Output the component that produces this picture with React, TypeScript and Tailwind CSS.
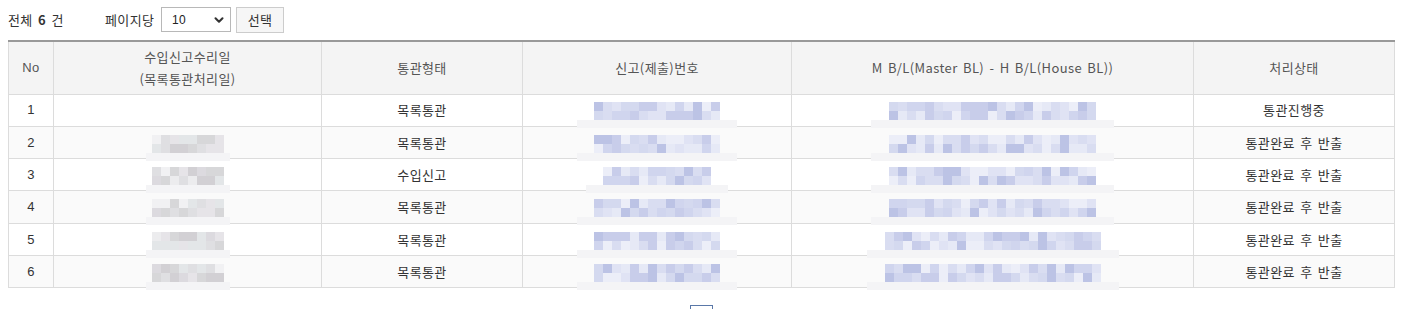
import { ChevronDown } from "lucide-react";

type Tone = "blue" | "gray";

const palettes: Record<Tone, string[]> = {
  blue: ["#c8cdea", "#d0d5ee", "#d9ddf1", "#e0e3f4", "#e6e9f6", "#eceef8", "#bcc3e5", "#d4d9ef"],
  gray: ["#d7d7d9", "#d2d0d4", "#dfdfe2", "#e6e4e8", "#ececee", "#dcdadf", "#f1f1f3", "#e3e6e8"],
};

// simple deterministic noise so the mosaic looks the same every render
const pick = (seed: number, i: number, len: number) => {
  const x = Math.sin(seed * 97.13 + i * 13.71) * 10000;
  return Math.floor((x - Math.floor(x)) * len);
};

const Mosaic = ({
  cells,
  tone,
  seed,
  band,
}: {
  cells: number;
  tone: Tone;
  seed: number;
  band: number;
}) => {
  const colors = palettes[tone];
  const rows = [0, 1];
  return (
    <div className="relative inline-flex flex-col align-middle">
      {rows.map((r) => (
        <div key={r} className="flex">
          {Array.from({ length: cells }).map((_, i) => (
            <div
              key={i}
              className="w-[9px] h-[9px]"
              style={{ backgroundColor: colors[pick(seed + r * 7, i, colors.length)] }}
            />
          ))}
        </div>
      ))}
      <div
        className="absolute top-[18px] h-[8px] bg-[#f4f4f6]"
        style={{ left: -band, right: -band }}
      />
    </div>
  );
};

type Row = {
  no: number;
  date: boolean;
  type: string;
  status: string;
  decl: number;
  bl: number;
};

const rows: Row[] = [
  { no: 1, date: false, type: "목록통관", status: "통관진행중", decl: 14, bl: 23 },
  { no: 2, date: true, type: "목록통관", status: "통관완료 후 반출", decl: 14, bl: 23 },
  { no: 3, date: true, type: "수입신고", status: "통관완료 후 반출", decl: 12, bl: 23 },
  { no: 4, date: true, type: "목록통관", status: "통관완료 후 반출", decl: 14, bl: 23 },
  { no: 5, date: true, type: "목록통관", status: "통관완료 후 반출", decl: 14, bl: 24 },
  { no: 6, date: true, type: "목록통관", status: "통관완료 후 반출", decl: 14, bl: 24 },
];

const cell = "border border-[#dcdcdc] text-center align-middle p-0";

const App = () => {
  return (
    <div
      className="pl-2 pr-3 text-[13px] text-[#333] bg-white min-h-[309px] tracking-[0.4px] [word-spacing:2px]"
      style={{ fontFamily: '"Noto Sans CJK KR", "Noto Sans", sans-serif' }}
    >
      <div className="flex items-center h-[40px] pb-[1px]">
        <span className="leading-none w-[55px] whitespace-nowrap">
          전체 <b className="font-bold">6</b> 건
        </span>
        <span className="ml-[42px] leading-none w-[56px]">페이지당</span>
        <div className="w-[70px] h-[25px] border border-[#b8b8b8] flex items-center justify-between pl-[10px] pr-[4px] bg-white">
          <span className="text-[12px] text-[#222]" style={{ fontFamily: '"Liberation Sans", sans-serif' }}>
            10
          </span>
          <ChevronDown size={14} strokeWidth={3.5} className="text-[#333]" />
        </div>
        <button className="ml-[5px] w-[48px] h-[26px] border border-[#cccccc] bg-[#f6f6f6] text-[13px] text-[#333] leading-none">
          선택
        </button>
      </div>

      <table className="w-[1387px] table-fixed border-collapse border-t-2 border-t-[#999999]">
        <colgroup>
          <col className="w-[45px]" />
          <col className="w-[268px]" />
          <col className="w-[201px]" />
          <col className="w-[269px]" />
          <col className="w-[402px]" />
          <col className="w-[201px]" />
        </colgroup>
        <thead>
          <tr className="h-[53px] bg-[#f4f4f4] text-[#555]">
            <th className={cell + " border-t-0 font-normal"} style={{ fontFamily: '"Liberation Sans", sans-serif' }}>
              No
            </th>
            <th className={cell + " border-t-0 font-normal leading-[22px]"}>
              수입신고수리일
              <br />
              (목록통관처리일)
            </th>
            <th className={cell + " border-t-0 font-normal"}>통관형태</th>
            <th className={cell + " border-t-0 font-normal"}>신고(제출)번호</th>
            <th className={cell + " border-t-0 font-normal"}>M B/L(Master BL) - H B/L(House BL))</th>
            <th className={cell + " border-t-0 font-normal"}>처리상태</th>
          </tr>
        </thead>
        <tbody>
          {rows.map((r) => (
            <tr key={r.no} className={"h-[32.3px] " + (r.no % 2 === 0 ? "bg-[#fafafa]" : "bg-white")}>
              <td className={cell} style={{ fontFamily: '"Liberation Sans", sans-serif' }}>
                {r.no}
              </td>
              <td className={cell}>
                {r.date && <Mosaic cells={8} tone="gray" seed={r.no * 3 + 1} band={6} />}
              </td>
              <td className={cell}>{r.type}</td>
              <td className={cell}>
                <Mosaic cells={r.decl} tone="blue" seed={r.no * 5 + 2} band={17} />
              </td>
              <td className={cell}>
                <Mosaic cells={r.bl} tone="blue" seed={r.no * 11 + 3} band={18} />
              </td>
              <td className={cell}>{r.status}</td>
            </tr>
          ))}
        </tbody>
      </table>

      <div className="flex justify-center w-[1387px] mt-[17px]">
        <div className="w-[23px] h-[24px] border border-[#5a78a8] bg-white" />
      </div>
    </div>
  );
};

export default App;
